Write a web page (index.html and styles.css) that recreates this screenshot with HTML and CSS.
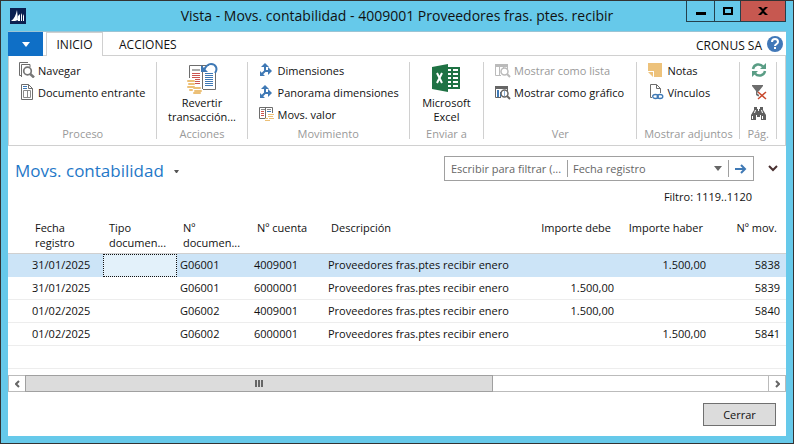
FILE: index.html
```html
<!DOCTYPE html>
<html lang="es">
<head>
    <meta charset="UTF-8">
    <meta name="viewport" content="width=device-width, initial-scale=1.0">
    <title>Vista - Movs. contabilidad</title>
    <link rel="stylesheet" href="styles.css">
</head>
<body>

<div class="window">
    <!-- Title bar -->
    <header class="titlebar">
        <svg class="app-icon" width="16" height="16" viewBox="0 0 16 16">
            <rect width="16" height="16" fill="#0b2050"/>
            <path d="M1 13C4 11 6 7 7 2L8 12L5 13ZM8 8L10 6V13H8ZM11 7L12 5V13H11ZM13 8L14 6V13H13Z" fill="#fff"/>
        </svg>
        <h1>Vista - Movs. contabilidad - 4009001 Proveedores fras. ptes. recibir</h1>
        <div class="window-buttons">
            <button type="button" class="min" aria-label="Minimizar">
                <svg width="10" height="8" viewBox="0 0 10 8"><path d="M0 5H10V8H0Z"/></svg>
            </button>
            <button type="button" class="max" aria-label="Maximizar">
                <svg width="10" height="8" viewBox="0 0 10 8"><path d="M0 0H10V8H0ZM2 2V6H8V2Z" fill-rule="evenodd"/></svg>
            </button>
            <button type="button" class="close" aria-label="Cerrar ventana">
                <svg width="10" height="8" viewBox="0 0 10 8"><path d="M0 0H3L5 2L7 0H10L6 4L10 8H7L5 6L3 8H0L4 4Z"/></svg>
            </button>
        </div>
    </header>

    <main class="client">
        <!-- Tabs -->
        <nav class="tabs">
            <button type="button" class="file-tab" aria-label="Archivo">
                <svg width="8" height="5" viewBox="0 0 8 5"><path d="M0 0H8L4 5Z" fill="#fff"/></svg>
            </button>
            <button type="button" class="tab active">INICIO</button>
            <button type="button" class="tab">ACCIONES</button>
            <span class="company">CRONUS SA</span>
            <button type="button" class="help" aria-label="Ayuda">
                <svg width="16" height="16" viewBox="0 0 16 16">
                    <circle cx="8" cy="8" r="8" fill="#4178b8"/>
                    <path d="M5 6C5 2 11 2 11 6C11 8 8 8 8 10" fill="none" stroke="#fff" stroke-width="2"/>
                    <path d="M7 11H9V13H7Z" fill="#fff"/>
                </svg>
            </button>
        </nav>

        <!-- Ribbon -->
        <section class="ribbon">
            <div class="group proceso">
                <div class="items">
                    <button type="button">
                        <svg width="16" height="16" viewBox="0 0 16 16">
                            <path d="M3 13.500H0.500V0.500H9M2.500 15V2.500H11V5" fill="none" stroke="#6d6d6d"/>
                            <circle cx="8.500" cy="9" r="3.800" fill="#fff" stroke="#777" stroke-width="1.700"/>
                            <path d="M11.300 12L15 15.500" stroke="#777" stroke-width="2.500"/>
                        </svg>
                        Navegar
                    </button>
                    <button type="button">
                        <svg width="16" height="16" viewBox="0 0 16 16">
                            <path d="M2.500 0.500H9.500L13.500 4.500V15.500H2.500Z" fill="#fff" stroke="#6d6d6d"/>
                            <path d="M9.500 0.500V4.500H13.500" fill="none" stroke="#6d6d6d"/>
                            <path d="M4 2.500H8M4 4.500H8" stroke="#3f79b5"/>
                            <path d="M4.500 6.500H11.500V13.500H4.500ZM8.500 6.500V13.500" fill="none" stroke="#8a8a8a"/>
                        </svg>
                        Documento entrante
                    </button>
                </div>
                <h2>Proceso</h2>
            </div>

            <div class="group acciones">
                <div class="items">
                    <button type="button" class="big">
                        <svg width="32" height="32" viewBox="0 0 32 32">
                            <path d="M3.500 16V3.500H29.500V27.500H17M16.500 3V27" fill="none" stroke="#6d6d6d"/>
                            <path d="M6 8H14" stroke="#aaa" stroke-width="2"/>
                            <path d="M6 11.500H14M6 13.500H14M6 15.500H14M9 17.500H14M9 19.500H14M9 21.500H14" stroke="#cc5450"/>
                            <path d="M19 11.500H27M19 13.500H27M19 15.500H27M19 17.500H27M19 19.500H27M19 21.500H27M19 23.500H27" stroke="#3f79b5"/>
                            <path d="M23 1H32V11H28V9H23Z" fill="#fff"/>
                            <path d="M18 8C20 4 22 2 25 2C30 2 32 7 29 11" fill="none" stroke="#3f79b5" stroke-width="2"/>
                            <path d="M15 3V10H22Z" fill="#3f79b5"/>
                            <path d="M1 18H9V30H1ZM7 25H16V32H7Z" fill="#fff"/>
                            <g fill="#ecc077">
                                <rect x="1" y="18" width="8" height="2" rx="1"/>
                                <rect x="2" y="21" width="7" height="2" rx="1"/>
                                <rect x="1" y="24" width="8" height="2" rx="1"/>
                                <rect x="3" y="27" width="4" height="2" rx="1"/>
                                <rect x="7" y="25" width="8" height="2" rx="1"/>
                                <rect x="8" y="28" width="8" height="2" rx="1"/>
                                <rect x="7" y="30" width="8" height="2" rx="1"/>
                            </g>
                        </svg>
                        <span>Revertir<br>transacción...</span>
                    </button>
                </div>
                <h2>Acciones</h2>
            </div>

            <div class="group movimiento">
                <div class="items">
                    <button type="button">
                        <svg width="16" height="16" viewBox="0 0 16 16">
                            <path d="M6 4V9H10M6 9L3 12" fill="none" stroke="#3f79b5" stroke-width="2"/>
                            <path d="M2 5L6 1L10 5ZM9 5L13 9L9 13ZM1 9V14H6Z" fill="#3f79b5"/>
                        </svg>
                        Dimensiones
                    </button>
                    <button type="button">
                        <svg width="16" height="16" viewBox="0 0 16 16">
                            <path d="M6 4V9H10M6 9L3 12" fill="none" stroke="#3f79b5" stroke-width="2"/>
                            <path d="M2 5L6 1L10 5ZM9 5L13 9L9 13ZM1 9V14H6Z" fill="#3f79b5"/>
                        </svg>
                        Panorama dimensiones
                    </button>
                    <button type="button">
                        <svg width="16" height="16" viewBox="0 0 16 16">
                            <path d="M6 12.500H0.500V1.500H13.500V7M6.500 1.500V12" fill="none" stroke="#6d6d6d"/>
                            <path d="M2 3.500H6M8 3.500H12" stroke="#888"/>
                            <path d="M2 5.500H5M2 7.500H5M2 9.500H5" stroke="#cc5450"/>
                            <path d="M8 5.500H12" stroke="#3f79b5"/>
                            <path d="M9 8.500H15M9 10.500H14M10 12.500H15M6 12.500H9M6 14.500H11" stroke="#ecc077"/>
                        </svg>
                        Movs. valor
                    </button>
                </div>
                <h2>Movimiento</h2>
            </div>

            <div class="group enviar">
                <div class="items">
                    <button type="button" class="big">
                        <svg width="32" height="32" viewBox="0 0 32 32">
                            <path d="M17 5H30V27H17Z" fill="#1f7244"/>
                            <path d="M18 7H21V9H18ZM18 11H21V13H18ZM18 15H21V17H18ZM18 19H21V21H18ZM18 23H21V25H18Z" fill="#fff"/>
                            <path d="M23 7H28V9H23ZM23 11H28V13H23ZM23 15H28V17H23ZM23 19H28V21H23ZM23 23H28V25H23Z" fill="#fff"/>
                            <path d="M2 5L18 2V30L2 27Z" fill="#1f7244"/>
                            <path d="M7 11L12 21M12 11L7 21" stroke="#fff" stroke-width="2"/>
                        </svg>
                        <span>Microsoft<br>Excel</span>
                    </button>
                </div>
                <h2>Enviar a</h2>
            </div>

            <div class="group ver">
                <div class="items">
                    <button type="button" disabled>
                        <svg width="16" height="16" viewBox="0 0 16 16">
                            <path d="M0 2H13V5H0Z" fill="#bbb"/>
                            <path d="M0.500 4V13.500H6M4.500 5V13M12.500 4V7M8.500 5V7" fill="none" stroke="#bbb"/>
                            <circle cx="9.500" cy="9.500" r="3.500" fill="#fff" stroke="#bbb" stroke-width="1.500"/>
                            <path d="M12 12L15 15" stroke="#bbb" stroke-width="2"/>
                        </svg>
                        Mostrar como lista
                    </button>
                    <button type="button">
                        <svg width="16" height="16" viewBox="0 0 16 16">
                            <path d="M0 2H13V5H0Z" fill="#666"/>
                            <path d="M0.500 4V13.500H6M12.500 4V7" fill="none" stroke="#666"/>
                            <path d="M2 6H4V13H2ZM5 8H6V13H5Z" fill="#3f79b5"/>
                            <circle cx="9.500" cy="9.500" r="3.500" fill="#fff" stroke="#666" stroke-width="1.500"/>
                            <path d="M9 7H10V12H9Z" fill="#8ab0d6"/>
                            <path d="M12 12L15 15" stroke="#666" stroke-width="2"/>
                        </svg>
                        Mostrar como gráfico
                    </button>
                </div>
                <h2>Ver</h2>
            </div>

            <div class="group adjuntos">
                <div class="items">
                    <button type="button">
                        <svg width="16" height="16" viewBox="0 0 16 16">
                            <path d="M0 1H14V15H6V9H0Z" fill="#edc27b"/>
                            <path d="M0 10H5V15Z" fill="#edc27b"/>
                        </svg>
                        Notas
                    </button>
                    <button type="button">
                        <svg width="16" height="16" viewBox="0 0 16 16">
                            <path d="M4 13.500H2.500V0.500H8.500L12.500 4.500V9M8.500 0.500V4.500H12.500" fill="none" stroke="#6d6d6d"/>
                            <ellipse cx="7.500" cy="12.500" rx="2.800" ry="2" fill="#fff" stroke="#3f79b5" stroke-width="1.300"/>
                            <ellipse cx="12" cy="12.500" rx="2.800" ry="2" fill="none" stroke="#3f79b5" stroke-width="1.300"/>
                        </svg>
                        Vínculos
                    </button>
                </div>
                <h2>Mostrar adjuntos</h2>
            </div>

            <div class="group pagina">
                <div class="items">
                    <button type="button" aria-label="Actualizar">
                        <svg width="16" height="16" viewBox="0 0 16 16">
                            <path d="M2 7C3 2 9 1 12 4.500M14 9C13 14 7 15 4 11.500" fill="none" stroke="#5a9d85" stroke-width="2.500"/>
                            <path d="M15 1V7H9ZM1 15V9H7Z" fill="#5a9d85"/>
                        </svg>
                    </button>
                    <button type="button" aria-label="Borrar filtro">
                        <svg width="16" height="16" viewBox="0 0 16 16">
                            <path d="M1 1H12V2L8 7V13L5 11V7L1 2Z" fill="#6d6d6d"/>
                            <path d="M7 8L15 15M15 8L7 15" stroke="#fff" stroke-width="3"/>
                            <path d="M7 8L15 15M15 8L7 15" stroke="#c8492d" stroke-width="1.500"/>
                        </svg>
                    </button>
                    <button type="button" aria-label="Buscar">
                        <svg width="16" height="16" viewBox="0 0 16 16">
                            <path d="M3 1H6V3H7V5H8V3H9V1H12V4L15 9V14H10V9H9V11H6V9H5V14H0V9L3 4Z" fill="#5f5f5f"/>
                            <path d="M1.500 10V13M11.500 10V13M4.500 4L3.500 7M10.500 4L11.500 7" stroke="#fff"/>
                        </svg>
                    </button>
                </div>
                <h2>Pág.</h2>
            </div>
        </section>

        <!-- Page heading and filter -->
        <section class="page-head">
            <button type="button" class="page-title">
                Movs. contabilidad
                <svg width="5" height="3" viewBox="0 0 5 3"><path d="M0 0H5L3 3H2Z" fill="#555"/></svg>
            </button>
            <form class="filter">
                <input type="text" aria-label="Texto del filtro" placeholder="Escribir para filtrar (...">
                <select aria-label="Campo del filtro">
                    <option>Fecha registro</option>
                </select>
                <svg class="caret" width="8" height="5" viewBox="0 0 8 5"><path d="M0 0H8L4 5Z" fill="#666"/></svg>
                <button type="submit" aria-label="Aplicar filtro">
                    <svg width="12" height="10" viewBox="0 0 12 10"><path d="M0 5H10M6 1L10 5L6 9" fill="none" stroke="#3f79b5" stroke-width="2"/></svg>
                </button>
            </form>
            <button type="button" class="expand" aria-label="Expandir">
                <svg width="10" height="7" viewBox="0 0 10 7"><path d="M1 1L5 5L9 1" fill="none" stroke="#4a3030" stroke-width="2"/></svg>
            </button>
        </section>
        <p class="filter-text">Filtro: 1119..1120</p>

        <!-- Entries -->
        <table>
            <colgroup>
                <col class="c-date"><col class="c-code"><col class="c-code"><col class="c-code"><col>
                <col class="c-amount"><col class="c-amount"><col class="c-entry">
            </colgroup>
            <thead>
                <tr>
                    <th>Fecha<br>registro</th>
                    <th>Tipo<br>documen...</th>
                    <th>Nº<br>documen...</th>
                    <th>Nº cuenta</th>
                    <th>Descripción</th>
                    <th class="num">Importe debe</th>
                    <th class="num">Importe haber</th>
                    <th class="num">Nº mov.</th>
                </tr>
            </thead>
            <tbody>
                <tr class="selected">
                    <td>31/01/2025</td><td class="focus"></td><td>G06001</td><td>4009001</td>
                    <td>Proveedores fras.ptes recibir enero</td>
                    <td class="num"></td><td class="num">1.500,00</td><td class="num">5838</td>
                </tr>
                <tr>
                    <td>31/01/2025</td><td></td><td>G06001</td><td>6000001</td>
                    <td>Proveedores fras.ptes recibir enero</td>
                    <td class="num">1.500,00</td><td class="num"></td><td class="num">5839</td>
                </tr>
                <tr>
                    <td>01/02/2025</td><td></td><td>G06002</td><td>4009001</td>
                    <td>Proveedores fras.ptes recibir enero</td>
                    <td class="num">1.500,00</td><td class="num"></td><td class="num">5840</td>
                </tr>
                <tr>
                    <td>01/02/2025</td><td></td><td>G06002</td><td>6000001</td>
                    <td>Proveedores fras.ptes recibir enero</td>
                    <td class="num"></td><td class="num">1.500,00</td><td class="num">5841</td>
                </tr>
                <tr>
                    <td></td><td></td><td></td><td></td><td></td><td></td><td></td><td></td>
                </tr>
            </tbody>
        </table>

        <!-- Horizontal scroll bar -->
        <div class="scrollbar">
            <button type="button" aria-label="Desplazar a la izquierda">
                <svg width="5" height="8" viewBox="0 0 5 8"><path d="M4 1L1 4L4 7" fill="none" stroke="#666" stroke-width="2"/></svg>
            </button>
            <div class="track">
                <div class="thumb">
                    <svg width="8" height="7" viewBox="0 0 8 7"><path d="M0 0H2V7H0ZM3 0H5V7H3ZM6 0H8V7H6Z" fill="#666"/></svg>
                </div>
            </div>
            <button type="button" aria-label="Desplazar a la derecha">
                <svg width="5" height="8" viewBox="0 0 5 8"><path d="M1 1L4 4L1 7" fill="none" stroke="#666" stroke-width="2"/></svg>
            </button>
        </div>

        <footer>
            <button type="button" class="close-page">Cerrar</button>
        </footer>
    </main>
</div>

</body>
</html>
```
FILE: styles.css
```css
* {
    box-sizing: border-box;
}
body {
    margin: 0;
    font-family: "Open Sans", "Noto Sans", sans-serif;
    font-size: 11px;
    line-height: 15px;
    color: #111;
}
button, input, select {
    font: inherit;
    color: inherit;
    margin: 0;
    padding: 0;
    border: none;
    border-radius: 0;
    background: none;
}
svg {
    display: block;
    flex: none;
}
h1, h2, p {
    margin: 0;
    font-weight: normal;
}
.window {
    display: flex;
    flex-direction: column;
    min-height: 100vh;
    padding: 0 7px 7px;
    border: 1px solid #333;
    background: #66c9ea;
}

/* Title bar */
.titlebar {
    display: grid;
    grid-template-columns: 100px 1fr 100px;
    align-items: center;
    height: 30px;
}
.app-icon {
    margin-left: 2px;
}
.titlebar h1 {
    font-size: 14px;
    line-height: 20px;
    text-align: center;
    white-space: nowrap;
}
.window-buttons {
    display: flex;
    align-self: start;
    height: 21px;
    border: 1px solid #24404c;
    border-top: none;
}
.window-buttons button {
    display: flex;
    align-items: center;
    justify-content: center;
    border-right: 1px solid #24404c;
}
.window-buttons .min {
    width: 28px;
}
.window-buttons .max {
    width: 26px;
}
.window-buttons .close {
    flex: 1;
    border-right: none;
    background: #c75850;
}

/* Tabs */
.client {
    flex: 1;
    display: flex;
    flex-direction: column;
    background: #fff;
    border-top: 1px solid #9cc4d4;
}
.tabs {
    display: flex;
    height: 24px;
    padding-right: 3px;
    box-shadow: inset 0 -1px #d0d0d0;
    font-size: 12px;
}
.file-tab {
    display: flex;
    align-items: center;
    justify-content: center;
    width: 35px;
    margin-right: 3px;
    background: #0f6fc6;
}
.tab {
    padding: 0 16px;
}
.tab.active {
    width: 57px;
    padding: 0;
    border: 1px solid #d0d0d0;
    border-bottom: none;
    background: #fff;
}
.company {
    margin-left: auto;
    padding: 6px 5px 0 0;
}
.help {
    align-self: center;
}

/* Ribbon */
.ribbon {
    display: flex;
    padding: 6px 8px 6px 0;
    border: 1px solid #d0d0d0;
    border-top: none;
}
.group {
    display: flex;
    flex-direction: column;
    justify-content: space-between;
    height: 77px;
    border-right: 1px solid #d0d0d0;
}
.group h2 {
    font-size: 11px;
    line-height: 10px;
    text-align: center;
    white-space: nowrap;
    color: #999;
}
.items {
    display: flex;
    flex-direction: column;
    align-items: flex-start;
    gap: 6px;
    padding-left: 11px;
}
.items button {
    display: flex;
    align-items: center;
    gap: 3px;
    height: 16px;
    white-space: nowrap;
}
.items button:disabled {
    color: #999;
}
.items .big {
    flex-direction: column;
    gap: 2px;
    width: 100%;
    height: 62px;
    line-height: 14px;
}
.acciones .items, .enviar .items {
    padding: 0;
}
.proceso .items {
    padding-left: 10px;
}
.proceso { flex: 149; }
.acciones { flex: 90; }
.movimiento { flex: 163; }
.enviar { flex: 74; }
.ver { flex: 154; }
.adjuntos { flex: 103; }
.pagina { flex: 36; }

/* Page heading */
.page-head {
    display: flex;
    align-items: center;
    padding: 10px 6px 0 7px;
}
.page-title {
    display: flex;
    align-items: center;
    gap: 10px;
    margin-right: auto;
    padding-top: 5px;
    font-size: 17px;
    line-height: 20px;
    color: #1f78c8;
}
.filter {
    display: flex;
    align-items: center;
    width: 310px;
    height: 25px;
    border: 1px solid #a0a0a0;
    color: #666;
}
.filter input {
    width: 123px;
    height: 17px;
    padding: 0 4px 0 6px;
    border-right: 1px solid #a0a0a0;
}
.filter input::placeholder {
    color: #666;
}
.filter select {
    flex: 1;
    padding-left: 5px;
    appearance: none;
}
.caret {
    margin-right: 6px;
}
.filter button {
    height: 17px;
    padding: 0 6px;
    border-left: 1px solid #a0a0a0;
}
.expand {
    width: 26px;
    padding-left: 14px;
}
.filter-text {
    padding: 8px 34px 0 0;
    text-align: right;
}

/* Entries */
table {
    width: 100%;
    margin-top: 16px;
    table-layout: fixed;
    border-spacing: 0;
}
.c-date { width: 95px; }
.c-code { width: 74px; }
.c-amount { width: 92px; }
.c-entry { width: 76px; }
th {
    height: 34px;
    padding: 0 7px 3px 6px;
    font-weight: normal;
    text-align: left;
    vertical-align: top;
    white-space: nowrap;
    border-bottom: 1px solid #d0d0d0;
}
td {
    height: 23px;
    padding: 0 4px 2px 3px;
    white-space: nowrap;
    border-bottom: 1px solid #ededed;
}
th:first-child {
    padding-left: 27px;
}
td:first-child {
    padding-left: 24px;
}
th:last-child {
    padding-right: 9px;
}
td:last-child {
    padding-right: 6px;
}
.num {
    text-align: right;
}
.selected td {
    background: #cce4f7;
    border-color: #cce4f7;
}
.selected .focus {
    border: 1px dotted #111;
    background: #e3f1fa;
}

/* Scroll bar */
.scrollbar {
    display: flex;
    height: 17px;
    margin-top: 6px;
    border: 1px solid #bbb;
}
.scrollbar button {
    display: flex;
    align-items: center;
    justify-content: center;
    width: 16px;
}
.track {
    flex: 1;
    display: flex;
    border-right: 1px solid #bbb;
}
.thumb {
    display: flex;
    align-items: center;
    justify-content: center;
    width: 63%;
    margin: -1px 0;
    border: 1px solid #a0a0a0;
    background: #dcdcdc;
}

footer {
    display: flex;
    justify-content: flex-end;
    padding: 11px 10px 10px;
}
.close-page {
    width: 73px;
    height: 23px;
    border: 1px solid #707070;
    background: #dcdcdc;
}
```
